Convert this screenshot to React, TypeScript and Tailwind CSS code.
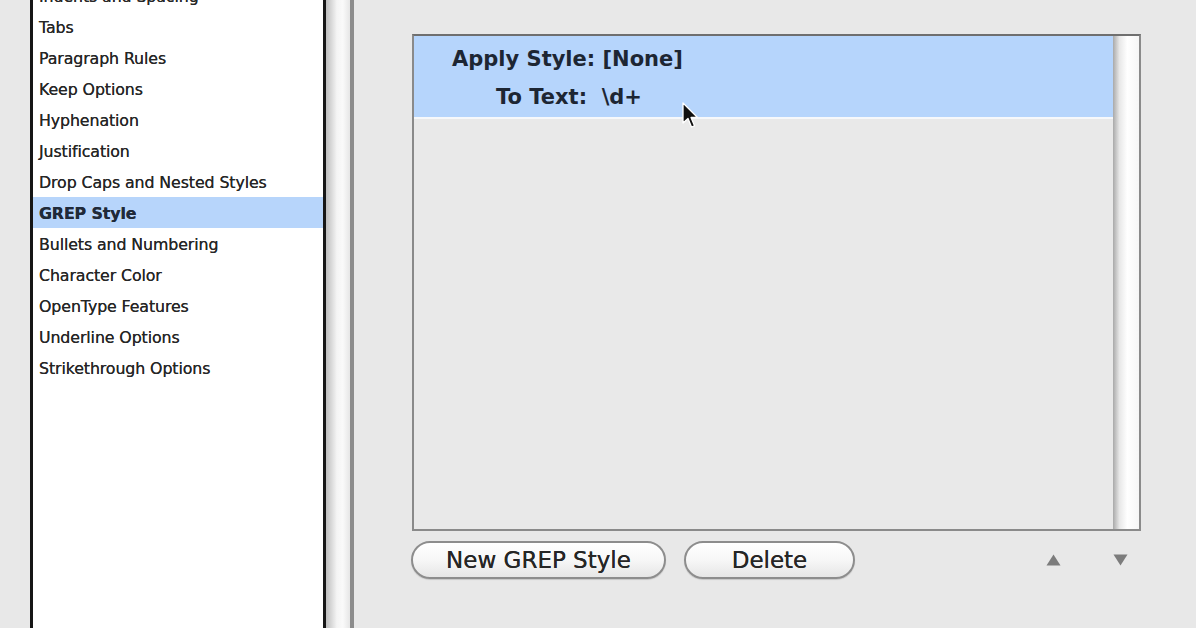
import React from "react";

const items = [
  "Indents and Spacing",
  "Tabs",
  "Paragraph Rules",
  "Keep Options",
  "Hyphenation",
  "Justification",
  "Drop Caps and Nested Styles",
  "GREP Style",
  "Bullets and Numbering",
  "Character Color",
  "OpenType Features",
  "Underline Options",
  "Strikethrough Options",
];

function Cursor() {
  return (
    <svg width="20" height="30" viewBox="0 0 20 30" className="absolute left-[680px] top-[101px]">
      <path
        d="M3 2 L3 22 L8 17.5 L11.5 26 L14.5 24.8 L11 16.5 L17.5 16.5 Z"
        fill="#111"
        stroke="#fff"
        strokeWidth="1.3"
        strokeLinejoin="round"
      />
    </svg>
  );
}

export default function App() {
  return (
    <div
      className="relative flex w-[1196px] h-[628px] overflow-hidden bg-[#e8e8e8]"
      style={{ fontFamily: '"DejaVu Sans", "Noto Sans", sans-serif' }}
    >
      {/* category list */}
      <div className="flex shrink-0 pl-[30px]">
        <div className="w-[296px] h-full bg-white border-x-[3px] border-[#161616] overflow-hidden">
          <div className="-mt-[20px] flex flex-col">
            {items.map((item) => (
              <div
                key={item}
                className={`h-[31px] flex items-center pl-[6px] pt-[3px] text-[15.8px] tracking-[-0.1px] [text-shadow:0_0_0.5px_#333] ${
                  item === "GREP Style" ? "bg-[#b7d5fb] font-bold text-[#1f2a3a]" : "text-[#262626]"
                }`}
              >
                {item}
              </div>
            ))}
          </div>
        </div>
        <div className="w-[24px] h-full bg-[linear-gradient(to_right,#bdbdbd,#f4f4f4_45%,#fafafa_70%,#e6e6e6)]" />
        <div className="w-[4px] h-full bg-[#8c8c8c]" />
      </div>

      {/* GREP style panel */}
      <div className="flex flex-col pl-[58px] pt-[34px]">
        <div className="flex w-[729px] h-[497px] border-2 border-[#8a8a8a] border-t-[#6f6f6f] bg-[#e9e9e9]">
          <div className="flex-1 flex flex-col">
            <div className="h-[81px] bg-[#b6d5fc] flex flex-col justify-center pt-[4px] text-[21px] font-bold text-[#1d2633]">
              <div className="h-[40px] flex items-center pl-[38px]">Apply Style: [None]</div>
              <div className="h-[40px] flex items-center pl-[82px] whitespace-pre">To Text:  \d+</div>
            </div>
            <div className="h-[2px] bg-[#f6f8fb]" />
          </div>
          <div className="w-[26px] h-full bg-[linear-gradient(to_right,#a9a9a9,#e8e8e8_25%,#ffffff_55%,#f6f6f6)]" />
        </div>

        <div className="flex items-center mt-[10px] h-[38px]">
          <button className="w-[255px] h-[38px] -ml-[1px] rounded-full border-2 border-[#8d8d8d] bg-gradient-to-b from-white via-[#f7f7f7] to-[#e6e6e6] text-[23px] text-[#262626] [text-shadow:0_0_0.6px_#262626] shadow-[0_1px_1px_rgba(0,0,0,0.15)]">
            New GREP Style
          </button>
          <button className="w-[171px] h-[38px] ml-[18px] rounded-full border-2 border-[#8d8d8d] bg-gradient-to-b from-white via-[#f7f7f7] to-[#e6e6e6] text-[23px] text-[#262626] [text-shadow:0_0_0.6px_#262626] shadow-[0_1px_1px_rgba(0,0,0,0.15)]">
            Delete
          </button>
          <div className="ml-auto flex items-center gap-[52px] pr-[13px]">
            <svg width="15" height="12" viewBox="0 0 15 12">
              <path d="M7.5 0.5 L14.5 11.5 L0.5 11.5 Z" fill="#7c7c7c" />
            </svg>
            <svg width="15" height="12" viewBox="0 0 15 12">
              <path d="M0.5 0.5 L14.5 0.5 L7.5 11.5 Z" fill="#7c7c7c" />
            </svg>
          </div>
        </div>
      </div>

      <Cursor />
    </div>
  );
}
